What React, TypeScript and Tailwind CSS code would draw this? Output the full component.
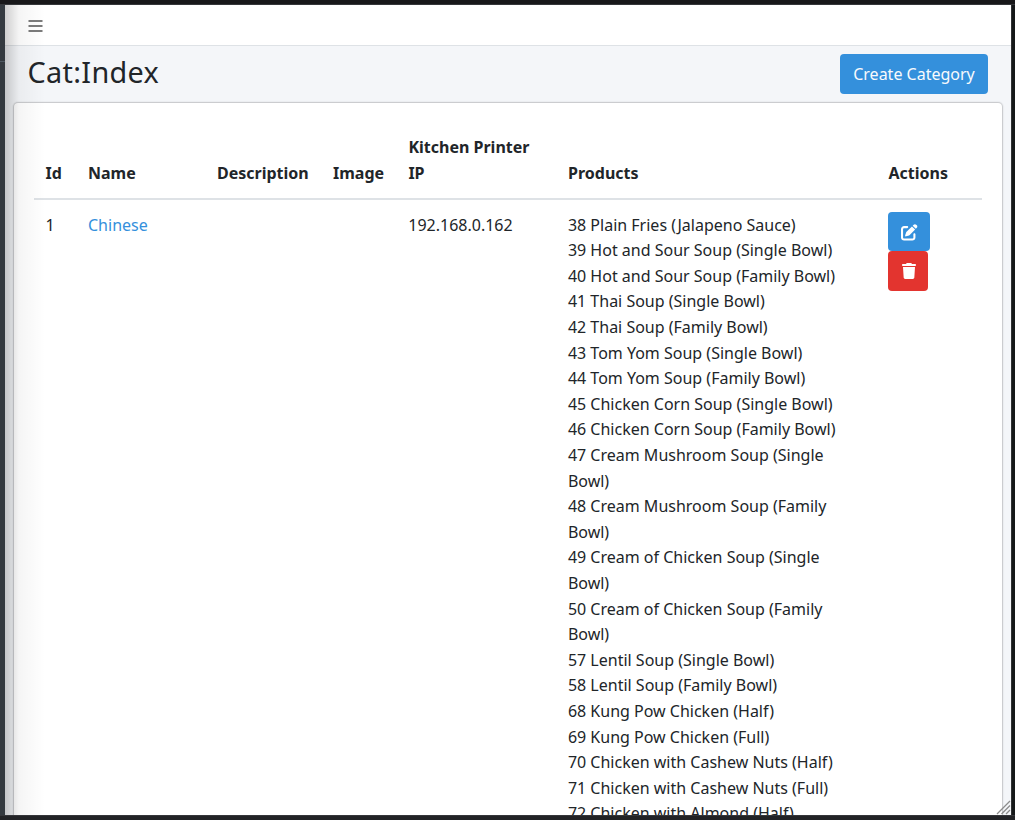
import { FaPenToSquare, FaTrash } from 'react-icons/fa6';

const products = [
  '38 Plain Fries (Jalapeno Sauce)',
  '39 Hot and Sour Soup (Single Bowl)',
  '40 Hot and Sour Soup (Family Bowl)',
  '41 Thai Soup (Single Bowl)',
  '42 Thai Soup (Family Bowl)',
  '43 Tom Yom Soup (Single Bowl)',
  '44 Tom Yom Soup (Family Bowl)',
  '45 Chicken Corn Soup (Single Bowl)',
  '46 Chicken Corn Soup (Family Bowl)',
  '47 Cream Mushroom Soup (Single Bowl)',
  '48 Cream Mushroom Soup (Family Bowl)',
  '49 Cream of Chicken Soup (Single Bowl)',
  '50 Cream of Chicken Soup (Family Bowl)',
  '57 Lentil Soup (Single Bowl)',
  '58 Lentil Soup (Family Bowl)',
  '68 Kung Pow Chicken (Half)',
  '69 Kung Pow Chicken (Full)',
  '70 Chicken with Cashew Nuts (Half)',
  '71 Chicken with Cashew Nuts (Full)',
  '72 Chicken with Almond (Half)',
];

const columns = [
  { label: 'Id', style: 'w-[42px] pl-[11.5px]' },
  { label: 'Name', style: 'w-[129px] pl-3' },
  { label: 'Description', style: 'w-[116px] pl-3' },
  { label: 'Image', style: 'w-[75px] pl-3' },
  { label: 'Kitchen Printer IP', style: 'w-[160px] pl-[12.4px]' },
  { label: 'Products', style: 'w-[320px] pl-3' },
  { label: 'Actions', style: 'w-[106px] pl-[12.5px]' },
];

function CategoryTable() {
  return (
    <table className="w-[948px] table-fixed border-separate border-spacing-0">
      <thead>
        <tr>
          {columns.map((c) => (
            <th
              key={c.label}
              className={`${c.style} border-b-2 border-[#dee2e6] py-3 pr-3 text-left align-bottom font-bold`}
            >
              {c.label}
            </th>
          ))}
        </tr>
      </thead>
      <tbody>
        <tr className="align-top">
          <td className="pt-[12.25px] pl-[11.5px]">1</td>
          <td className="px-3 pt-[12.25px] text-[#3490dc]">Chinese</td>
          <td className="p-3" />
          <td className="p-3" />
          <td className="pt-[12.25px] pl-[12.25px]">192.168.0.162</td>
          <td className="pt-[12.25px] pr-3 pl-[11.9px]">
            {products.map((p) => (
              <div key={p}>{p}</div>
            ))}
          </td>
          <td className="p-3">
            <div className="flex flex-col items-start">
              <button aria-label="Edit" className="flex h-[39px] w-[42px] items-center justify-center rounded bg-[#3490dc] pt-px pl-px text-white">
                <FaPenToSquare className="size-[16.5px]" />
              </button>
              <button aria-label="Delete" className="flex h-10 w-10 items-center justify-center rounded bg-[#e3342f] pl-px text-white">
                <FaTrash className="h-4 w-[14px]" />
              </button>
            </div>
          </td>
        </tr>
      </tbody>
    </table>
  );
}

export default function App() {
  return (
    <div className="flex h-[820px] w-[1015px] flex-col overflow-hidden bg-[#18191b] font-['Noto_Sans',sans-serif] text-base leading-[25.6px] text-[#212529]">
      <div className="h-[5px] shrink-0 border-b border-[#35373a] bg-[#18181a]" />
      <div className="flex h-[810px] shrink-0">
        <div className="w-[5px] shrink-0 bg-[#343a40]">
          <div className="h-[57px] border-b border-[#4f5962]" />
        </div>
        <main className="relative flex w-[1006px] shrink-0 flex-col overflow-hidden bg-[#f4f6f9]">
          <header className="flex h-[41px] shrink-0 items-start border-b border-[#dee2e6] bg-white pt-[15px] pl-[23px]">
            <svg className="h-3 w-[15px]" viewBox="0 0 15 12" fill="#7c7c7c">
              <path d="M.5 0h14v2H.5zM.5 5h14v2H.5zM.5 10h14v2H.5z" />
            </svg>
          </header>
          <div className="flex h-[57px] shrink-0 items-start justify-between pr-[23px] pl-[22.5px]">
            <h1 className="pt-[9px] text-[28.8px] leading-[34.6px] tracking-[0.33px]">Cat:Index</h1>
            <button className="mt-2 h-10 w-[148px] rounded bg-[#3490dc] pt-px text-center text-[#f8fafc]">
              Create Category
            </button>
          </div>
          <section className="ml-[9px] h-[900px] w-[988px] shrink-0 rounded bg-white pt-[20.2px] pl-5 shadow-[0_0_1px_1px_rgba(0,0,0,0.11),0_0_2px_1px_rgba(0,0,0,0.1)]">
            <CategoryTable />
          </section>
          <div className="pointer-events-none absolute inset-y-0 left-0 w-10 bg-linear-to-r from-black/19 via-black/4 via-35% to-transparent" />
          <svg className="absolute right-0 bottom-0 size-[15px]" viewBox="0 0 15 15" stroke="#8c8c8c" strokeWidth="1.3">
            <path d="M1 14 14 1M5.5 14 14 5.5M10 14 14 10" />
          </svg>
        </main>
        <div className="w-1 shrink-0 border-l border-[#303234] bg-[#151819]" />
      </div>
      <div className="h-[5px] shrink-0 border-t border-[#35363a] bg-[#222326]" />
    </div>
  );
}
